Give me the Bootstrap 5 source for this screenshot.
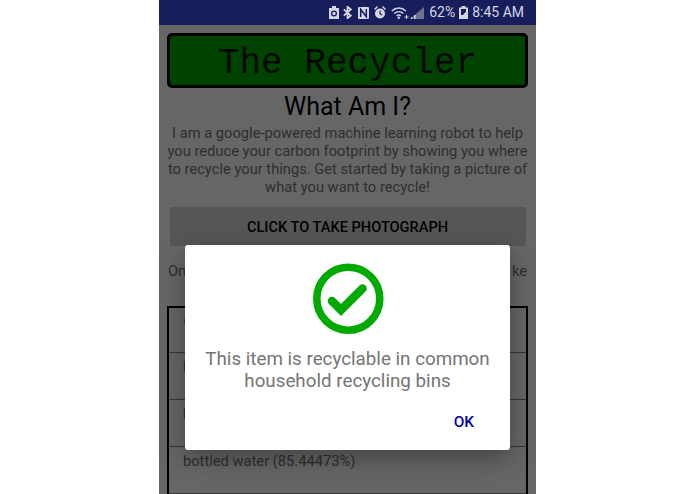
<!DOCTYPE html>
<html lang="en">
<head>
  <meta charset="UTF-8" />
  <meta name="viewport" content="width=device-width, initial-scale=1.0"/>
  <title>The Recycler</title>
  <link href="https://cdn.jsdelivr.net/npm/bootstrap@5.3.3/dist/css/bootstrap.min.css" rel="stylesheet">
  <style>
    html, body {
      height: 494px;
      overflow: hidden;
      background: #fff;
    }
    .phone {
      width: 377px;
      height: 494px;
      margin-left: 159px;
      font-family: Roboto, sans-serif;
      overflow: hidden;
      position: relative;
      background: #fff;
    }
    .status-bar {
      position: relative;
      z-index: 2;
      height: 25px;
      background: #181d5c;
      color: #d4d6e2;
      font-size: 14px;
      padding-right: 12px;
    }
    .screen {
      padding: 8px 8px 0;
      color: #000;
    }
    .logo-box {
      height: 55px;
      background: #00a800;
      border: 3px solid #000;
      border-radius: 5px;
      font-family: "Liberation Mono", monospace;
      font-size: 36px;
      line-height: 55px;
      text-align: center;
      color: #051505;
    }
    .what-title {
      font-size: 25px;
      line-height: 30px;
      margin: 4px 0 2px;
      font-weight: 400;
      text-align: center;
    }
    .intro {
      font-size: 14.7px;
      line-height: 18px;
      color: #757575;
      text-align: center;
      margin: 0;
      white-space: nowrap;
    }
    .photo-btn {
      display: block;
      width: 356px;
      height: 39px;
      margin: 11px auto 0;
      padding: 8px 0 6px;
      border: 0;
      border-radius: 2px;
      background: #d6d7d7;
      font-size: 14.6px;
      font-weight: 500;
      color: #000;
    }
    .hint {
      font-size: 14.7px;
      line-height: 18px;
      color: #757575;
      margin: 16px 0 0;
      padding: 0 1px;
      white-space: nowrap;
    }
    .result-box {
      border: 2px solid #000;
      margin-top: 26px;
    }
    .result-row {
      height: 47px;
      padding: 5px 14px;
      font-size: 14.7px;
      line-height: 18px;
      color: #757575;
      border-bottom: 1px solid #888;
    }
    .result-row:first-child {
      height: 45px;
    }
    .dim {
      position: absolute;
      inset: 25px 0 0;
      background: rgba(0, 0, 0, .6);
    }
    .dialog {
      position: absolute;
      left: 26px;
      top: 245px;
      width: 325px;
      height: 205px;
      background: #fff;
      border-radius: 3px;
      box-shadow: 0 8px 24px rgba(0, 0, 0, .35);
      text-align: center;
    }
    .dialog svg {
      display: block;
      margin: 18px auto 0;
    }
    .dialog-text {
      font-size: 18.8px;
      line-height: 22px;
      color: #757575;
      margin: 13px 0 0;
    }
    .ok-btn {
      position: absolute;
      right: 36px;
      bottom: 16px;
      border: 0;
      background: none;
      padding: 0;
      font-size: 15.4px;
      font-weight: 500;
      color: #0000a8;
    }
    .status-icon {
      display: block;
      flex: none;
    }
    .gap-one { margin-left: 1px; }
    .gap-five { margin-left: 5px; }
    .gap-six { margin-left: 6px; }
    .gap-batt { margin: 0 4px; }
  </style>
</head>
<body>

<div class="phone">
  <div class="status-bar d-flex align-items-center justify-content-end">
    <svg class="status-icon" width="10" height="13" viewBox="0 0 10 13"><path d="M3 0h4v2h3v11H0V2h3z" fill="#d4d6e2"/><circle cx="5" cy="7.500" r="2.400" fill="none" stroke="#181d5c" stroke-width="1.300"/></svg>
    <svg class="status-icon ms-1" width="9" height="13" viewBox="0 0 9 13"><path d="M.8 3.300l7 6.300-3.300 2.700V.7l3.300 2.700-7 6.300" fill="none" stroke="#d4d6e2" stroke-width="1.800"/></svg>
    <svg class="status-icon gap-six" width="11" height="12" viewBox="0 0 11 12"><rect width="11" height="12" rx="1" fill="#d4d6e2"/><path d="M2.700 10V2.500L8.300 9.500V2" fill="none" stroke="#181d5c" stroke-width="1.500"/></svg>
    <svg class="status-icon gap-five" width="12" height="13" viewBox="0 0 12 13"><circle cx="6" cy="7.500" r="5" fill="#d4d6e2"/><path d="M6 4.500v3.300l2.200 1.200" fill="none" stroke="#181d5c" stroke-width="1.100"/><path d="M0 3l3-3 1 1-3 3zM12 3L9 0 8 1l3 3z" fill="#d4d6e2"/></svg>
    <svg class="status-icon gap-five" width="18" height="12" viewBox="0 0 18 12"><path d="M.8 4c4-3.900 10-3.900 14 0M3.300 6.500c2.600-2.500 6.400-2.500 9 0M5.800 9c1.200-1.100 2.800-1.100 4 0" fill="none" stroke="#d4d6e2" stroke-width="1.500"/><circle cx="7.800" cy="10.800" r="1.200" fill="#d4d6e2"/><path d="M13.500 10h4M15.500 8v4" stroke="#d4d6e2"/></svg>
    <svg class="status-icon gap-one" width="14" height="12" viewBox="0 0 14 12"><path d="M14 0v12H0z" fill="#6e7192"/><path d="M1 12v-2h1v2zM4 12V8h1.500v4z" fill="#d4d6e2"/></svg>
    <span class="gap-five">62%</span>
    <svg class="status-icon gap-batt" width="9" height="13" viewBox="0 0 9 13"><path d="M2.500 0h4v1.500H9V13H0V1.500h2.500z" fill="#d4d6e2"/><path d="M2 3h5v2.500L4 9H2z" fill="#181d5c"/></svg>
    <span>8:45 AM</span>
  </div>

  <div class="screen">
    <div class="logo-box">The Recycler</div>
    <h1 class="what-title">What Am I?</h1>
    <p class="intro">I am a google-powered machine learning robot to help<br>you reduce your carbon footprint by showing you where<br>to recycle your things. Get started by taking a picture of<br>what you want to recycle!</p>
    <button class="photo-btn" type="button">CLICK TO TAKE PHOTOGRAPH</button>
    <p class="hint d-flex justify-content-between"><span>On</span><span>ke</span></p>
    <div class="result-box">
      <div class="result-row">w</div>
      <div class="result-row">b</div>
      <div class="result-row">b</div>
      <div class="result-row">bottled water (85.44473%)</div>
    </div>
  </div>

  <div class="dim"></div>

  <div class="dialog">
    <svg width="72" height="72" viewBox="0 0 72 72">
      <circle cx="36.300" cy="35.700" r="31.500" fill="none" stroke="#00aa00" stroke-width="7.500"/>
      <path d="M20 38l9 9L50.500 25.500" fill="none" stroke="#00aa00" stroke-width="8.500" stroke-linecap="round"/>
    </svg>
    <p class="dialog-text">This item is recyclable in common<br>household recycling bins</p>
    <button class="ok-btn" type="button">OK</button>
  </div>
</div>

</body>
</html>
